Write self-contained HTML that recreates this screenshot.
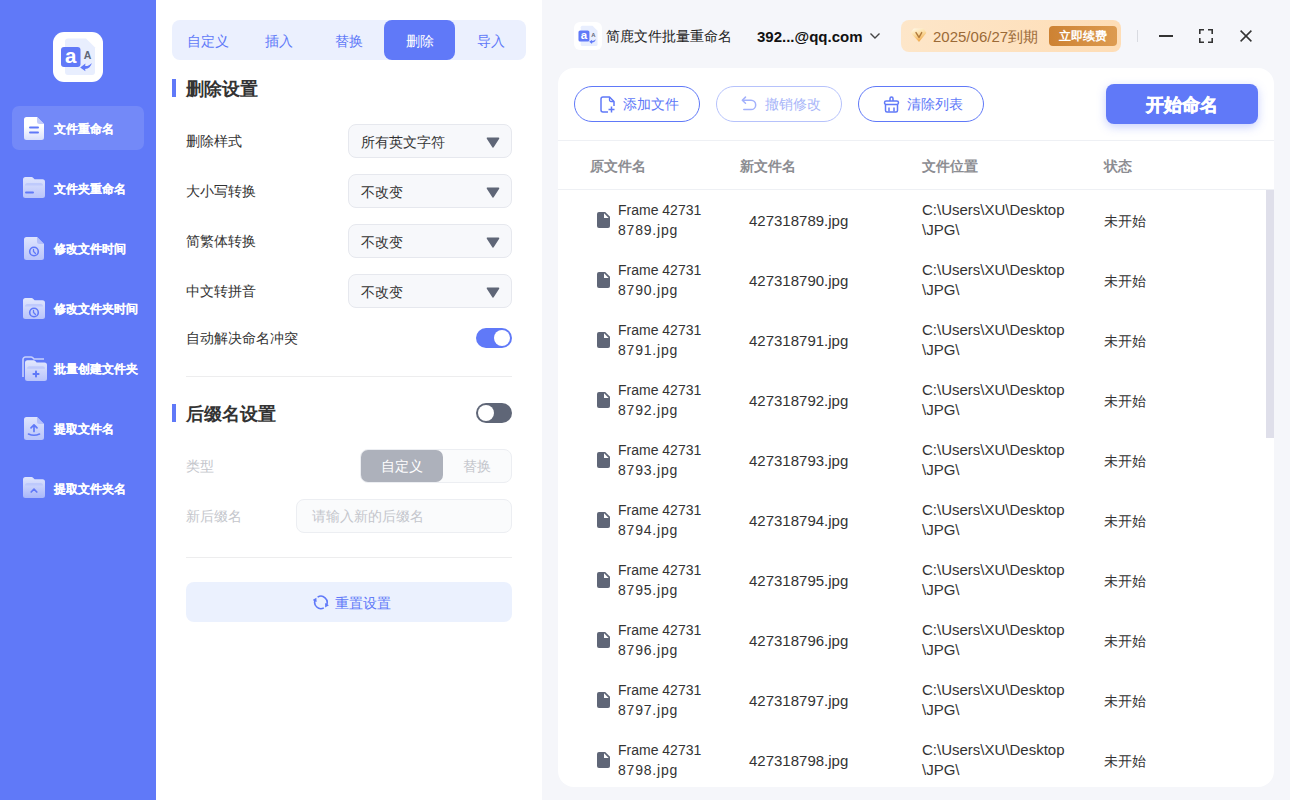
<!DOCTYPE html>
<html><head><meta charset="utf-8">
<style>
*{box-sizing:border-box;margin:0;padding:0}
html,body{width:1290px;height:800px;overflow:hidden;background:#f5f6fa;font-family:"Liberation Sans",sans-serif;}
svg{display:block}
.abs{position:absolute}
#side{position:absolute;left:0;top:0;width:156px;height:800px;background:#6079f8}
#logo{position:absolute;left:53px;top:32px;width:50px;height:50px;background:#fff;border-radius:11px}
.nav{position:absolute;left:12px;width:132px;height:44px;border-radius:7px}
.nav.act{background:rgba(255,255,255,0.12)}
.nav svg{position:absolute;left:10px;top:10px}
.nav .tx{position:absolute;left:42px;top:1px;line-height:44px;font-size:12px;font-weight:700;color:#fff;white-space:nowrap;-webkit-text-stroke:0.1px #fff}
#mid{position:absolute;left:156px;top:0;width:386px;height:800px;background:#fff}
#tabs{position:absolute;left:16px;top:20px;width:354px;height:40px;background:#ebf0fe;border-radius:8px}
.tab{position:absolute;top:0;height:40px;width:71px;line-height:42px;text-align:center;font-size:14px;color:#6079f8}
.tab.act{background:#6079f8;color:#fff;border-radius:8px}
.sec{position:absolute;left:16px;font-size:18px;font-weight:700;color:#333;line-height:24px}
.sec:before{content:"";position:absolute;left:0;top:2px;width:4px;height:18px;background:#6079f8}
.sec span{position:absolute;left:14px;white-space:nowrap}
.lbl{position:absolute;left:30px;font-size:14px;color:#333;line-height:20px;white-space:nowrap}
.lbl.dis{color:#c4c6cc}
.sel{position:absolute;left:192px;width:164px;height:34px;background:#f7f8fb;border:1px solid #e6e8ee;border-radius:8px}
.sel span{position:absolute;left:12px;top:1px;line-height:32px;font-size:14px;color:#333}
.sel svg{position:absolute;right:11px;top:12px}
.tog{position:absolute;left:320px;width:36px;height:20px;border-radius:10px}
.tog:after{content:"";position:absolute;top:2px;width:16px;height:16px;border-radius:50%;background:#fff}
.tog.on{background:#6079f8}.tog.on:after{right:2px}
.tog.off{background:#5f6677}.tog.off:after{left:2px}
.hr{position:absolute;left:30px;width:326px;height:1px;background:#ededee}
#seg{position:absolute;left:204px;top:449px;width:152px;height:34px;border:1px solid #eceef2;border-radius:8px;background:#fafbfc}
#seg .a{position:absolute;left:0;top:0;width:82px;height:32px;background:#adb1bb;border-radius:7px;color:#fff;font-size:14px;line-height:32px;text-align:center}
#seg .b{position:absolute;left:82px;top:0;width:68px;height:32px;color:#c4c6cc;font-size:14px;line-height:32px;text-align:center}
#inp{position:absolute;left:140px;top:499px;width:216px;height:34px;border:1px solid #eceef2;border-radius:8px;background:#fafbfc}
#inp span{position:absolute;left:15px;top:0;line-height:32px;font-size:14px;color:#c4c6cc;white-space:nowrap}
#reset{position:absolute;left:30px;top:582px;width:326px;height:40px;background:#ebf1fe;border-radius:8px}
#reset svg{position:absolute;left:127px;top:13px}
#reset span{position:absolute;left:149px;top:1px;line-height:40px;font-size:14px;color:#6079f8;white-space:nowrap}
#right{position:absolute;left:542px;top:0;width:748px;height:800px;background:#f5f6fa}
#appic{position:absolute;left:32px;top:22px;width:28px;height:28px;background:#fff;border-radius:6px}
#appname{position:absolute;left:64px;top:26px;font-size:14px;line-height:20px;color:#222;white-space:nowrap}
#acct{position:absolute;left:215px;top:27px;font-size:15px;font-weight:700;line-height:20px;color:#111;white-space:nowrap}
#chev{position:absolute;left:327px;top:31px}
#vip{position:absolute;left:359px;top:20px;width:220px;height:32px;border-radius:8px;background:linear-gradient(90deg,#fde6c9,#feddb6)}
#vip svg{position:absolute;left:9px;top:8px}
#vip .d{position:absolute;left:32px;top:1px;line-height:32px;font-size:15px;color:#9b6a37;white-space:nowrap}
#vip .btn{position:absolute;left:148px;top:6px;width:68px;height:20px;border-radius:4px;background:linear-gradient(90deg,#cd8233,#dd9b50);color:#fff;font-size:12px;font-weight:700;line-height:21px;text-align:center}
#vsep{position:absolute;left:595px;top:30px;width:1px;height:12px;background:#d9dbe1}
#wmin{position:absolute;left:617px;top:35px;width:14px;height:1.6px;background:#333}
#wmax{position:absolute;left:657px;top:29px}
#wclose{position:absolute;left:698px;top:30px}
#card{position:absolute;left:16px;top:68px;width:716px;height:719px;background:#fff;border-radius:16px;overflow:hidden}
.pill{position:absolute;top:18px;height:36px;width:126px;border:1px solid #6079f8;border-radius:18px;font-size:14px;color:#6079f8;line-height:34px;white-space:nowrap}
.pill svg{position:absolute;left:25px;top:9px}
.pill span{position:absolute;left:48px}
#go{position:absolute;left:548px;top:16px;width:152px;height:40px;border-radius:8px;background:#6079f8;box-shadow:0 3px 10px rgba(96,121,248,0.35);color:#fff;font-size:18px;font-weight:700;line-height:42px;text-align:center;-webkit-text-stroke:0.5px #fff}
.chr{position:absolute;left:0;width:716px;height:1px;background:#eef0f4}
.th{position:absolute;top:88px;font-size:14px;font-weight:700;color:#8c8d92;white-space:nowrap;line-height:20px}
.row{position:absolute;left:0;width:716px;height:60px}
.row .fi{position:absolute;left:39px;top:22px}
.row .n1{position:absolute;left:60px;top:10px;font-size:14px;line-height:20px;color:#333;white-space:nowrap}
.row .n2{position:absolute;left:191px;top:21px;font-size:15px;line-height:20px;color:#333;white-space:nowrap}
.row .n3{position:absolute;left:364px;top:10px;font-size:15px;line-height:20px;color:#333;white-space:nowrap}
.row .n4{position:absolute;left:546px;top:21px;font-size:14px;line-height:20px;color:#333;white-space:nowrap}
#sb{position:absolute;left:708px;top:122px;width:8px;height:248px;background:#dfdfea}
</style></head><body>
<div id="side">
  <div id="logo"><svg width="50" height="50" viewBox="0 0 50 50"><path d="M15 6.5H33L42 15.5V40A3 3 0 0 1 39 43H15A3 3 0 0 1 12 40V9.5A3 3 0 0 1 15 6.5Z" fill="#e8eefe"/><rect x="8" y="15" width="19.5" height="20" rx="3" fill="#6079f8"/><text x="17.6" y="30.5" text-anchor="middle" font-family="Liberation Sans" font-weight="700" font-size="20.5" fill="#fff">a</text><text x="34.6" y="27.2" text-anchor="middle" font-family="Liberation Sans" font-weight="700" font-size="10.5" fill="#5f6677">A</text><path d="M27.2 35.4L32.4 31.6L32.2 34.1Q36.2 34.2 38.8 31Q37.6 36.6 32.1 37L32.4 39.3Z" fill="#6079f8"/></svg></div>
  <div class="nav act" style="top:106px"><svg width="26" height="26" viewBox="0 0 26 26"><defs><linearGradient id="gd1" x1="0" y1="0" x2="0" y2="1"><stop offset="0.4" stop-color="#ffffff"/><stop offset="1" stop-color="#d8dffc"/></linearGradient></defs><path d="M4.5 1H15L22 8V21.5A2.5 2.5 0 0 1 19.5 24H4.5A2.5 2.5 0 0 1 2 21.5V3.5A2.5 2.5 0 0 1 4.5 1Z" fill="url(#gd1)"/><path d="M15 1V5.5A2.5 2.5 0 0 0 17.5 8H22Z" fill="#c2ccfb"/><rect x="7" y="10.5" width="10" height="2" rx="1" fill="#6079f8"/><rect x="7" y="15.5" width="10" height="2" rx="1" fill="#6079f8"/></svg><div class="tx">文件重命名</div></div>
  <div class="nav" style="top:166px"><svg width="26" height="26" viewBox="0 0 26 26"><defs><linearGradient id="gf2" x1="0" y1="0" x2="0" y2="1"><stop offset="0" stop-color="#dfe5fd"/><stop offset="1" stop-color="#b9c4fb"/></linearGradient></defs><path d="M3.5 1H9.5Q10.5 1 11.3 1.9L12.6 3.2H20.5A2.5 2.5 0 0 1 23 5.7V19.5A2.5 2.5 0 0 1 20.5 22H3.5A2.5 2.5 0 0 1 1 19.5V3.5A2.5 2.5 0 0 1 3.5 1Z" fill="url(#gf2)"/><path d="M3 9.5Q3 7 5.5 7H18.5Q21 7 21 9.5Z" fill="#b9c5fb" opacity="0.8"/><rect x="3" y="15.5" width="9" height="2" rx="1" fill="#6079f8"/></svg><div class="tx">文件夹重命名</div></div>
  <div class="nav" style="top:226px"><svg width="26" height="26" viewBox="0 0 26 26"><defs><linearGradient id="gd3" x1="0" y1="0" x2="0" y2="1"><stop offset="0" stop-color="#dfe5fd"/><stop offset="1" stop-color="#b9c4fb"/></linearGradient></defs><path d="M4.5 1H15L22 8V21.5A2.5 2.5 0 0 1 19.5 24H4.5A2.5 2.5 0 0 1 2 21.5V3.5A2.5 2.5 0 0 1 4.5 1Z" fill="url(#gd3)"/><path d="M15 1V5.5A2.5 2.5 0 0 0 17.5 8H22Z" fill="#b3bffb"/><circle cx="12" cy="15.5" r="4.3" fill="none" stroke="#6079f8" stroke-width="1.6"/><path d="M11.5 13.5V15.5L13.5 17.5" fill="none" stroke="#6079f8" stroke-width="1.3" stroke-linecap="round"/></svg><div class="tx">修改文件时间</div></div>
  <div class="nav" style="top:286px"><svg width="26" height="26" viewBox="0 0 26 26"><defs><linearGradient id="gf4" x1="0" y1="0" x2="0" y2="1"><stop offset="0" stop-color="#e3e8fd"/><stop offset="1" stop-color="#b9c4fb"/></linearGradient></defs><path d="M3.5 2H9.5Q10.5 2 11.3 2.9L12.6 4.2H20.5A2.5 2.5 0 0 1 23 6.7V20.5A2.5 2.5 0 0 1 20.5 23H3.5A2.5 2.5 0 0 1 1 20.5V4.5A2.5 2.5 0 0 1 3.5 2Z" fill="url(#gf4)"/><path d="M3 10.5Q3 8 5.5 8H18.5Q21 8 21 10.5Z" fill="#b9c5fb" opacity="0.8"/><circle cx="12" cy="16.5" r="4.3" fill="none" stroke="#6079f8" stroke-width="1.6"/><path d="M11.5 14.5V16.5L13.5 18.5" fill="none" stroke="#6079f8" stroke-width="1.3" stroke-linecap="round"/></svg><div class="tx">修改文件夹时间</div></div>
  <div class="nav" style="top:346px"><svg width="26" height="26" viewBox="0 0 26 26"><defs><linearGradient id="gf5" x1="0" y1="0" x2="0" y2="1"><stop offset="0" stop-color="#e3e8fd"/><stop offset="1" stop-color="#b9c4fb"/></linearGradient></defs><path d="M1 21V3.5A2.5 2.5 0 0 1 3.5 1H9Q10 1 10.8 1.8L12 3H22" fill="none" stroke="#d3dafd" stroke-width="1.6" opacity="0.9"/><path d="M5.5 4.2H11.5Q12.5 4.2 13.3 5.1000000000000005L14.6 6.4H22.5A2.5 2.5 0 0 1 25 8.9V22.5A2.5 2.5 0 0 1 22.5 25.0H5.5A2.5 2.5 0 0 1 3 22.5V6.7A2.5 2.5 0 0 1 5.5 4.2Z" fill="url(#gf5)"/><path d="M5 12.7Q5 10.2 7.5 10.2H20.5Q23 10.2 23 12.7Z" fill="#b9c5fb" opacity="0.8"/><rect x="10.5" y="17" width="7" height="2" rx="0.8" fill="#6079f8"/><rect x="13" y="14.5" width="2" height="7" rx="0.8" fill="#6079f8"/></svg><div class="tx">批量创建文件夹</div></div>
  <div class="nav" style="top:406px"><svg width="26" height="26" viewBox="0 0 26 26"><defs><linearGradient id="gd6" x1="0" y1="0" x2="0" y2="1"><stop offset="0" stop-color="#dfe5fd"/><stop offset="1" stop-color="#b9c4fb"/></linearGradient></defs><path d="M4.5 1H15L22 8V21.5A2.5 2.5 0 0 1 19.5 24H4.5A2.5 2.5 0 0 1 2 21.5V3.5A2.5 2.5 0 0 1 4.5 1Z" fill="url(#gd6)"/><path d="M15 1V5.5A2.5 2.5 0 0 0 17.5 8H22Z" fill="#b3bffb"/><path d="M12 15.5V9M9 11.8L12 8.8L15 11.8" fill="none" stroke="#6079f8" stroke-width="1.7" stroke-linecap="round" stroke-linejoin="round"/><path d="M6.5 18Q12 20.5 17.5 18" fill="none" stroke="#6079f8" stroke-width="1.6" stroke-linecap="round"/></svg><div class="tx">提取文件名</div></div>
  <div class="nav" style="top:466px"><svg width="26" height="26" viewBox="0 0 26 26"><defs><linearGradient id="gf7" x1="0" y1="0" x2="0" y2="1"><stop offset="0" stop-color="#dfe5fd"/><stop offset="1" stop-color="#a9b7fa"/></linearGradient></defs><path d="M3.5 1H9.5Q10.5 1 11.3 1.9L12.6 3.2H20.5A2.5 2.5 0 0 1 23 5.7V19.5A2.5 2.5 0 0 1 20.5 22H3.5A2.5 2.5 0 0 1 1 19.5V3.5A2.5 2.5 0 0 1 3.5 1Z" fill="url(#gf7)"/><path d="M3 9.5Q3 7 5.5 7H18.5Q21 7 21 9.5Z" fill="#b9c5fb" opacity="0.8"/><path d="M9.2 16L12 13.2L14.8 16" fill="none" stroke="#6079f8" stroke-width="1.7" stroke-linecap="round" stroke-linejoin="round"/></svg><div class="tx">提取文件夹名</div></div>
</div>
<div id="mid">
  <div id="tabs">
    <div class="tab" style="left:0">自定义</div>
    <div class="tab" style="left:71px">插入</div>
    <div class="tab" style="left:141px">替换</div>
    <div class="tab act" style="left:212px">删除</div>
    <div class="tab" style="left:283px">导入</div>
  </div>
  <div class="sec" style="top:77px"><span>删除设置</span></div>
  <div class="lbl" style="top:131px">删除样式</div>
  <div class="sel" style="top:124px"><span>所有英文字符</span><svg width="14" height="11" viewBox="0 0 14 11"><path d="M1.5 1.2H12.5L7 9.8Z" fill="#5f6677" stroke="#5f6677" stroke-width="1.6" stroke-linejoin="round"/></svg></div>
  <div class="lbl" style="top:181px">大小写转换</div>
  <div class="sel" style="top:174px"><span>不改变</span><svg width="14" height="11" viewBox="0 0 14 11"><path d="M1.5 1.2H12.5L7 9.8Z" fill="#5f6677" stroke="#5f6677" stroke-width="1.6" stroke-linejoin="round"/></svg></div>
  <div class="lbl" style="top:231px">简繁体转换</div>
  <div class="sel" style="top:224px"><span>不改变</span><svg width="14" height="11" viewBox="0 0 14 11"><path d="M1.5 1.2H12.5L7 9.8Z" fill="#5f6677" stroke="#5f6677" stroke-width="1.6" stroke-linejoin="round"/></svg></div>
  <div class="lbl" style="top:281px">中文转拼音</div>
  <div class="sel" style="top:274px"><span>不改变</span><svg width="14" height="11" viewBox="0 0 14 11"><path d="M1.5 1.2H12.5L7 9.8Z" fill="#5f6677" stroke="#5f6677" stroke-width="1.6" stroke-linejoin="round"/></svg></div>
  <div class="lbl" style="top:328px">自动解决命名冲突</div>
  <div class="tog on" style="top:328px"></div>
  <div class="hr" style="top:376px"></div>
  <div class="sec" style="top:402px"><span>后缀名设置</span></div>
  <div class="tog off" style="top:403px"></div>
  <div class="lbl dis" style="top:456px">类型</div>
  <div id="seg"><div class="a">自定义</div><div class="b">替换</div></div>
  <div class="lbl dis" style="top:506px">新后缀名</div>
  <div id="inp"><span>请输入新的后缀名</span></div>
  <div class="hr" style="top:557px"></div>
  <div id="reset"><svg width="16" height="16" viewBox="0 0 16 16"><path d="M4.61 2.14A6.2 6.2 0 0 1 13.47 10.12" fill="none" stroke="#6079f8" stroke-width="1.6"/><path d="M12.13 12.47L15.93 10.28L12.12 8.08Z" fill="#6079f8"/><path d="M10.81 12.87A6.2 6.2 0 0 1 2.15 5.08" fill="none" stroke="#6079f8" stroke-width="1.6"/><path d="M3.33 2.63L-0.32 5.08L3.64 7.01Z" fill="#6079f8"/></svg><span>重置设置</span></div>
</div>
<div id="right">
  <div id="appic"><svg width="28" height="28" viewBox="0 0 50 50"><path d="M15 6.5H33L42 15.5V40A3 3 0 0 1 39 43H15A3 3 0 0 1 12 40V9.5A3 3 0 0 1 15 6.5Z" fill="#e8eefe"/><rect x="8" y="15" width="19.5" height="20" rx="3" fill="#6079f8"/><text x="17.6" y="30.5" text-anchor="middle" font-family="Liberation Sans" font-weight="700" font-size="20.5" fill="#fff">a</text><text x="34.6" y="27.2" text-anchor="middle" font-family="Liberation Sans" font-weight="700" font-size="10.5" fill="#5f6677">A</text><path d="M27.2 35.4L32.4 31.6L32.2 34.1Q36.2 34.2 38.8 31Q37.6 36.6 32.1 37L32.4 39.3Z" fill="#6079f8"/></svg></div>
  <div id="appname">简鹿文件批量重命名</div>
  <div id="acct">392...@qq.com</div>
  <svg id="chev" width="12" height="10" viewBox="0 0 12 10"><path d="M1.5 2.5L6 7L10.5 2.5" fill="none" stroke="#444" stroke-width="1.4"/></svg>
  <div id="vip"><svg width="17" height="15" viewBox="0 0 17 15"><defs><linearGradient id="dg" x1="0.2" y1="0" x2="0.6" y2="1"><stop offset="0" stop-color="#fff8e6"/><stop offset="0.45" stop-color="#fbdca0"/><stop offset="1" stop-color="#f0a748"/></linearGradient></defs><path d="M4 0.6H13.2Q13.6 0.6 13.9 0.9L16.2 4.5Q16.4 4.9 16.1 5.2L9.4 13.5Q9 13.9 8.6 13.5L0.9 5.2Q0.6 4.9 0.8 4.5L3.3 0.9Q3.6 0.6 4 0.6Z" fill="url(#dg)"/><path d="M6 4.6L9 9.3L11.7 4.6" fill="none" stroke="#b07a3c" stroke-width="1.4" stroke-linecap="round" stroke-linejoin="round"/></svg><div class="d">2025/06/27到期</div><div class="btn">立即续费</div></div>
  <div id="vsep"></div>
  <div id="wmin"></div>
  <svg id="wmax" width="14" height="14" viewBox="0 0 14 14"><path d="M0.8 5V0.8H5M9 0.8H13.2V5M13.2 9V13.2H9M5 13.2H0.8V9" fill="none" stroke="#333" stroke-width="1.6"/></svg>
  <svg id="wclose" width="12" height="12" viewBox="0 0 12 12"><path d="M0.6 0.6L11.4 11.4M11.4 0.6L0.6 11.4" stroke="#333" stroke-width="1.5"/></svg>
  <div id="card">
    <div class="pill" style="left:16px"><svg width="17" height="18" viewBox="0 0 17 18"><path d="M8 16H3A2 2 0 0 1 1 14V3A2 2 0 0 1 3 1H9.5L14 5.5V10" fill="none" stroke="#6079f8" stroke-width="1.5" stroke-linejoin="round"/><path d="M9.5 1V4A1.5 1.5 0 0 0 11 5.5H14" fill="none" stroke="#6079f8" stroke-width="1.3"/><path d="M11.5 10.5V16.5M8.5 13.5H14.5" stroke="#6079f8" stroke-width="1.5"/></svg><span>添加文件</span></div>
    <div class="pill" style="left:158px;border-color:#b6c2fb;color:#a9b6f9"><svg width="17" height="17" viewBox="0 0 17 17" style="left:24px"><path d="M2 4.2H10A4.7 4.7 0 0 1 10 13.6H2.8" fill="none" stroke="#a3b1fb" stroke-width="1.5" stroke-linecap="round"/><path d="M4.5 1.1L1.3 4.2L4.5 7.3" fill="none" stroke="#a3b1fb" stroke-width="1.5" stroke-linecap="round" stroke-linejoin="round"/></svg><span>撤销修改</span></div>
    <div class="pill" style="left:300px"><svg width="17" height="18" viewBox="0 0 17 18" style="left:24px"><path d="M7 5V2.5A1.5 1.5 0 0 1 10 2.5V5" fill="none" stroke="#6079f8" stroke-width="1.5"/><rect x="1.5" y="5" width="14" height="3.5" rx="1.7" fill="none" stroke="#6079f8" stroke-width="1.5"/><path d="M2.5 8.5L2.5 14.5A1.5 1.5 0 0 0 4 16H13A1.5 1.5 0 0 0 14.5 14.5V8.5" fill="none" stroke="#6079f8" stroke-width="1.5"/><path d="M6 11.5V15.5M11 11.5V15.5" stroke="#6079f8" stroke-width="1.5"/></svg><span>清除列表</span></div>
    <div id="go">开始命名</div>
    <div class="chr" style="top:72px"></div>
    <div class="th" style="left:32px">原文件名</div>
    <div class="th" style="left:182px">新文件名</div>
    <div class="th" style="left:364px">文件位置</div>
    <div class="th" style="left:546px">状态</div>
    <div class="chr" style="top:121px"></div>
    <div class="row" style="top:122px"><svg class="fi" width="13" height="16" viewBox="0 0 13 16"><path d="M2 0H8.2L13 4.8V14A2 2 0 0 1 11 16H2A2 2 0 0 1 0 14V2A2 2 0 0 1 2 0Z" fill="#5f6677"/><path d="M7 1.3V6H11.7Z" fill="#fff"/></svg><div class="n1">Frame 42731<br><span style="letter-spacing:0.8px">8789.jpg</span></div><div class="n2">427318789.jpg</div><div class="n3">C:\Users\XU\Desktop<br>\JPG\</div><div class="n4">未开始</div></div>
    <div class="row" style="top:182px"><svg class="fi" width="13" height="16" viewBox="0 0 13 16"><path d="M2 0H8.2L13 4.8V14A2 2 0 0 1 11 16H2A2 2 0 0 1 0 14V2A2 2 0 0 1 2 0Z" fill="#5f6677"/><path d="M7 1.3V6H11.7Z" fill="#fff"/></svg><div class="n1">Frame 42731<br><span style="letter-spacing:0.8px">8790.jpg</span></div><div class="n2">427318790.jpg</div><div class="n3">C:\Users\XU\Desktop<br>\JPG\</div><div class="n4">未开始</div></div>
    <div class="row" style="top:242px"><svg class="fi" width="13" height="16" viewBox="0 0 13 16"><path d="M2 0H8.2L13 4.8V14A2 2 0 0 1 11 16H2A2 2 0 0 1 0 14V2A2 2 0 0 1 2 0Z" fill="#5f6677"/><path d="M7 1.3V6H11.7Z" fill="#fff"/></svg><div class="n1">Frame 42731<br><span style="letter-spacing:0.8px">8791.jpg</span></div><div class="n2">427318791.jpg</div><div class="n3">C:\Users\XU\Desktop<br>\JPG\</div><div class="n4">未开始</div></div>
    <div class="row" style="top:302px"><svg class="fi" width="13" height="16" viewBox="0 0 13 16"><path d="M2 0H8.2L13 4.8V14A2 2 0 0 1 11 16H2A2 2 0 0 1 0 14V2A2 2 0 0 1 2 0Z" fill="#5f6677"/><path d="M7 1.3V6H11.7Z" fill="#fff"/></svg><div class="n1">Frame 42731<br><span style="letter-spacing:0.8px">8792.jpg</span></div><div class="n2">427318792.jpg</div><div class="n3">C:\Users\XU\Desktop<br>\JPG\</div><div class="n4">未开始</div></div>
    <div class="row" style="top:362px"><svg class="fi" width="13" height="16" viewBox="0 0 13 16"><path d="M2 0H8.2L13 4.8V14A2 2 0 0 1 11 16H2A2 2 0 0 1 0 14V2A2 2 0 0 1 2 0Z" fill="#5f6677"/><path d="M7 1.3V6H11.7Z" fill="#fff"/></svg><div class="n1">Frame 42731<br><span style="letter-spacing:0.8px">8793.jpg</span></div><div class="n2">427318793.jpg</div><div class="n3">C:\Users\XU\Desktop<br>\JPG\</div><div class="n4">未开始</div></div>
    <div class="row" style="top:422px"><svg class="fi" width="13" height="16" viewBox="0 0 13 16"><path d="M2 0H8.2L13 4.8V14A2 2 0 0 1 11 16H2A2 2 0 0 1 0 14V2A2 2 0 0 1 2 0Z" fill="#5f6677"/><path d="M7 1.3V6H11.7Z" fill="#fff"/></svg><div class="n1">Frame 42731<br><span style="letter-spacing:0.8px">8794.jpg</span></div><div class="n2">427318794.jpg</div><div class="n3">C:\Users\XU\Desktop<br>\JPG\</div><div class="n4">未开始</div></div>
    <div class="row" style="top:482px"><svg class="fi" width="13" height="16" viewBox="0 0 13 16"><path d="M2 0H8.2L13 4.8V14A2 2 0 0 1 11 16H2A2 2 0 0 1 0 14V2A2 2 0 0 1 2 0Z" fill="#5f6677"/><path d="M7 1.3V6H11.7Z" fill="#fff"/></svg><div class="n1">Frame 42731<br><span style="letter-spacing:0.8px">8795.jpg</span></div><div class="n2">427318795.jpg</div><div class="n3">C:\Users\XU\Desktop<br>\JPG\</div><div class="n4">未开始</div></div>
    <div class="row" style="top:542px"><svg class="fi" width="13" height="16" viewBox="0 0 13 16"><path d="M2 0H8.2L13 4.8V14A2 2 0 0 1 11 16H2A2 2 0 0 1 0 14V2A2 2 0 0 1 2 0Z" fill="#5f6677"/><path d="M7 1.3V6H11.7Z" fill="#fff"/></svg><div class="n1">Frame 42731<br><span style="letter-spacing:0.8px">8796.jpg</span></div><div class="n2">427318796.jpg</div><div class="n3">C:\Users\XU\Desktop<br>\JPG\</div><div class="n4">未开始</div></div>
    <div class="row" style="top:602px"><svg class="fi" width="13" height="16" viewBox="0 0 13 16"><path d="M2 0H8.2L13 4.8V14A2 2 0 0 1 11 16H2A2 2 0 0 1 0 14V2A2 2 0 0 1 2 0Z" fill="#5f6677"/><path d="M7 1.3V6H11.7Z" fill="#fff"/></svg><div class="n1">Frame 42731<br><span style="letter-spacing:0.8px">8797.jpg</span></div><div class="n2">427318797.jpg</div><div class="n3">C:\Users\XU\Desktop<br>\JPG\</div><div class="n4">未开始</div></div>
    <div class="row" style="top:662px"><svg class="fi" width="13" height="16" viewBox="0 0 13 16"><path d="M2 0H8.2L13 4.8V14A2 2 0 0 1 11 16H2A2 2 0 0 1 0 14V2A2 2 0 0 1 2 0Z" fill="#5f6677"/><path d="M7 1.3V6H11.7Z" fill="#fff"/></svg><div class="n1">Frame 42731<br><span style="letter-spacing:0.8px">8798.jpg</span></div><div class="n2">427318798.jpg</div><div class="n3">C:\Users\XU\Desktop<br>\JPG\</div><div class="n4">未开始</div></div>
    <div id="sb"></div>
  </div>
</div>
</body></html>
